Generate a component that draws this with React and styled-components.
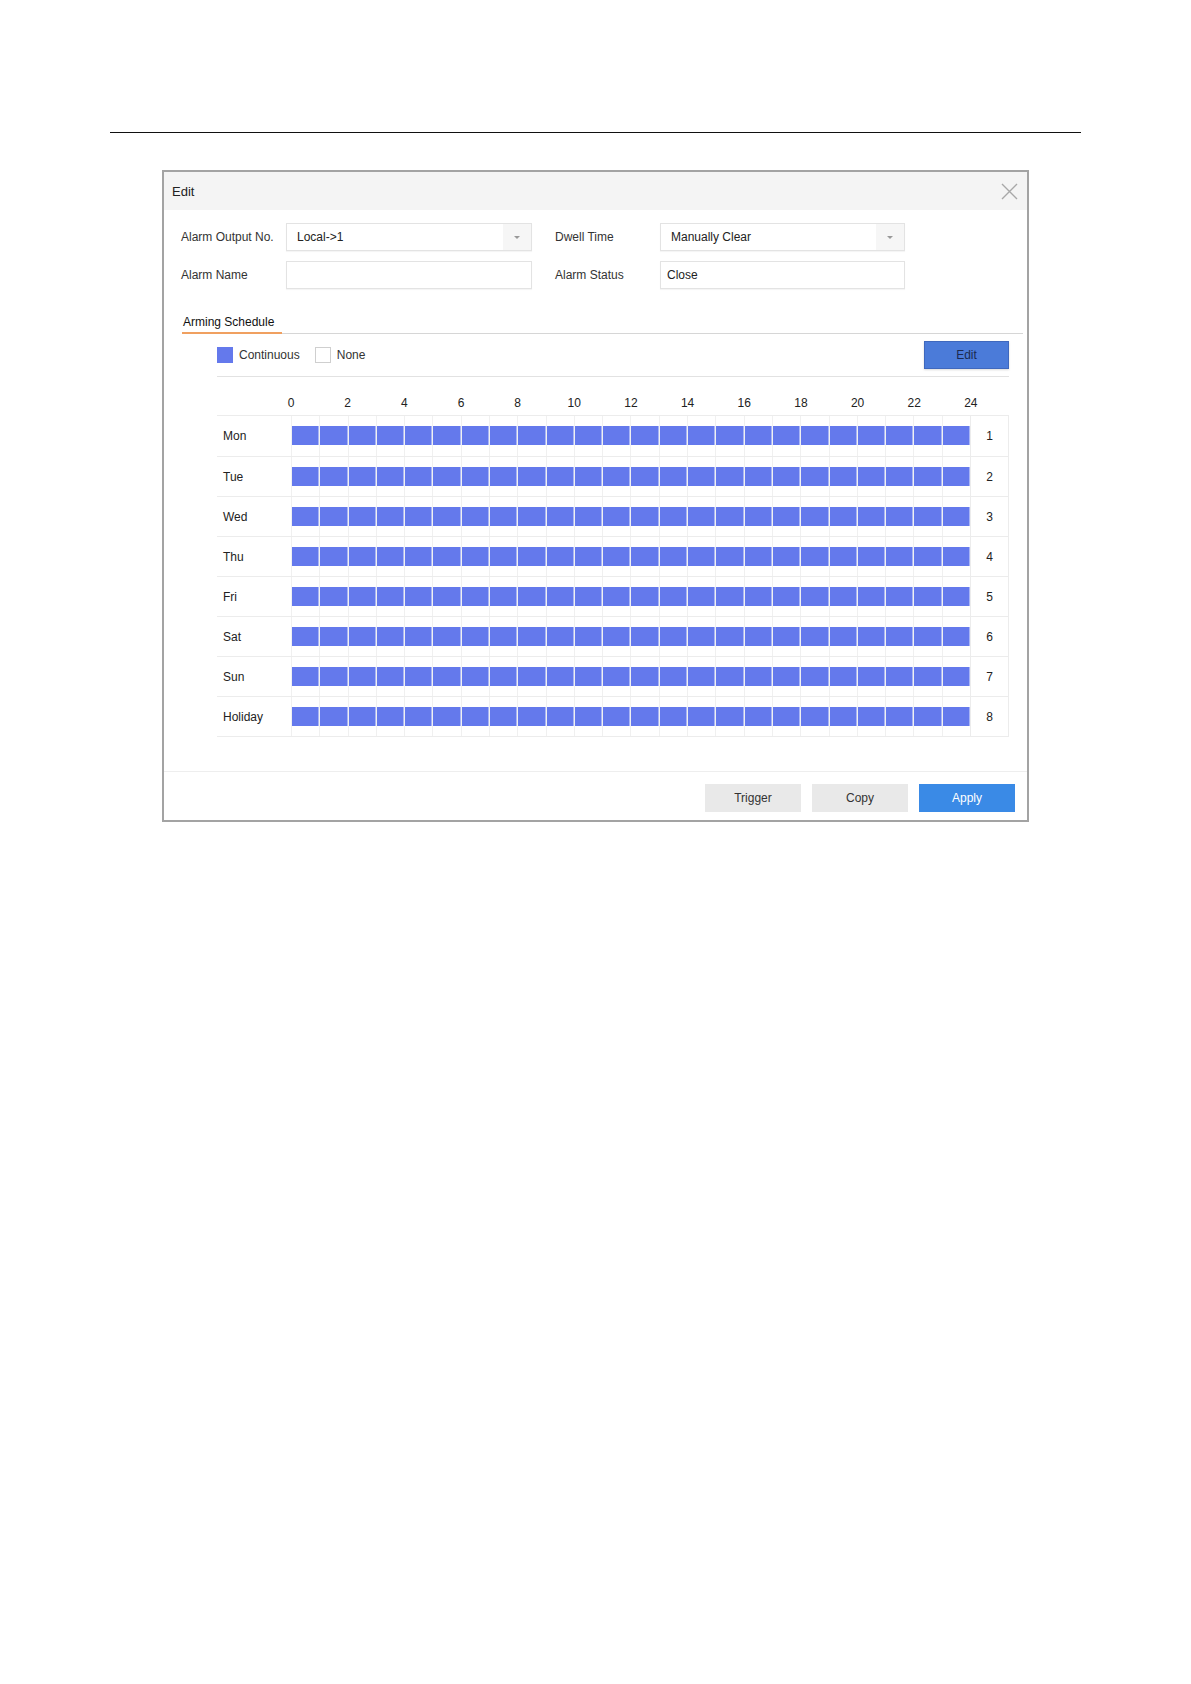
import React from 'react';
import styled, { createGlobalStyle } from 'styled-components';

const GlobalStyle = createGlobalStyle`
  html, body {
    margin: 0;
    padding: 0;
    background: #fff;
  }
  body {
    font-family: "Liberation Sans", Arial, sans-serif;
    color: #333;
  }
`;

const Page = styled.div`
  min-height: 1684px;
  padding: 132px 0 0 110px;
  box-sizing: border-box;
`;

const Rule = styled.div`
  width: 971px;
  border-top: 1px solid #111;
`;

const Dialog = styled.div`
  margin: 37px 0 0 52px;
  width: 867px;
  height: 652px;
  box-sizing: border-box;
  border: 2px solid #a3a3a3;
  display: flex;
  flex-direction: column;
  background: #fff;
`;

const TitleBar = styled.div`
  height: 38px;
  background: #f4f4f4;
  display: flex;
  align-items: center;
  justify-content: space-between;
  padding: 0 9px 0 8px;
  font-size: 13px;
  color: #222;
`;

const CloseButton = styled.button`
  width: 18px;
  height: 18px;
  padding: 0;
  border: none;
  background: none;
  display: flex;
  align-items: center;
  justify-content: center;
`;

const Form = styled.div`
  display: grid;
  grid-template-columns: 105px 246px 128px 245px;
  row-gap: 10px;
  padding: 13px 0 0 17px;
  align-items: center;
  & > :nth-child(4n + 3) {
    margin-left: 23px;
  }
`;

const Label = styled.div`
  font-size: 12px;
  color: #333;
  white-space: nowrap;
`;

const Field = styled.div`
  height: 28px;
  box-sizing: border-box;
  border: 1px solid #e3e3e3;
  box-shadow: 0 1px 1px rgba(0, 0, 0, 0.04);
  display: flex;
  align-items: center;
  font-size: 12px;
  color: #222;
  padding-left: ${(p) => (p.$select ? '10px' : '6px')};
  background: #fff;
`;

const FieldText = styled.span`
  flex: 1;
`;

const Caret = styled.span`
  width: 28px;
  align-self: stretch;
  background: #f6f6f6;
  display: flex;
  align-items: center;
  justify-content: center;
  &::after {
    content: '';
    border-left: 3px solid transparent;
    border-right: 3px solid transparent;
    border-top: 3px solid #999;
  }
`;

const TabBar = styled.div`
  margin: 26px 4px 0 18px;
  border-bottom: 1px solid #d6d6d6;
  display: flex;
`;

const Tab = styled.div`
  width: 99px;
  padding: 0 0 3px 1px;
  line-height: 14px;
  font-size: 12px;
  color: #111;
  border-bottom: 2px solid #f0a060;
  margin-bottom: -1px;
`;

const Schedule = styled.div`
  margin: 0 18px 0 53px;
`;

const LegendRow = styled.div`
  display: flex;
  align-items: center;
  padding: 7px 0 7px;
  border-bottom: 1px solid #e2e2e2;
`;

const LegendItem = styled.div`
  display: flex;
  align-items: center;
  gap: 6px;
  font-size: 12px;
  color: #333;
  margin-right: 15px;
`;

const Swatch = styled.span`
  width: 16px;
  height: 16px;
  box-sizing: border-box;
  background: ${(p) => (p.$on ? '#6479ec' : '#fff')};
  border: 1px solid ${(p) => (p.$on ? '#6479ec' : '#cfcfcf')};
`;

const EditButton = styled.button`
  margin-left: auto;
  width: 85px;
  height: 28px;
  background: #4b7bd9;
  border: 1px solid #3f68bd;
  box-shadow: 0 1px 2px rgba(0, 0, 0, 0.15);
  color: #1b2a50;
  font-family: inherit;
  font-size: 12px;
`;

const HourScale = styled.div`
  display: grid;
  grid-template-columns: 74px repeat(12, 56.67px) 38px;
  height: 38px;
  align-items: end;
  padding-bottom: 5px;
  box-sizing: border-box;
  font-size: 12px;
  color: #222;
`;

const HourTick = styled.span`
  transform: translateX(-50%);
  justify-self: start;
`;

const Table = styled.div`
  border: 1px solid #ececec;
  border-left: none;
`;

const Row = styled.div`
  display: grid;
  grid-template-columns: 74px 680px 1fr;
  height: 40px;
  border-top: ${(p) => (p.$first ? 'none' : '1px solid #ececec')};
  box-sizing: border-box;
`;

const DayLabel = styled.div`
  display: flex;
  align-items: center;
  padding-left: 6px;
  font-size: 12px;
  color: #222;
  box-shadow: 1px 0 0 #ececec;
`;

const Hours = styled.div`
  display: grid;
  grid-template-columns: repeat(24, 1fr);
  border-right: 1px solid #ececec;
`;

const HourCell = styled.div`
  border-left: 1px solid #f0f0f0;
  padding-top: 10px;
  &::before {
    content: '';
    display: block;
    height: 19px;
    background: #6479ec;
    box-shadow: inset -1px 0 0 #a9b5f5;
  }
`;

const RowNumber = styled.div`
  display: flex;
  align-items: center;
  justify-content: center;
  font-size: 12px;
  color: #222;
`;

const Footer = styled.div`
  margin-top: auto;
  border-top: 1px solid #eeeeee;
  display: flex;
  justify-content: flex-end;
  gap: 11px;
  padding: 12px 12px 8px 0;
`;

const FooterButton = styled.button`
  width: 96px;
  height: 28px;
  border: none;
  font-family: inherit;
  font-size: 12px;
  background: ${(p) => (p.$primary ? '#3a8ae6' : '#e9e9e9')};
  color: ${(p) => (p.$primary ? '#fff' : '#333')};
`;

const days = ['Mon', 'Tue', 'Wed', 'Thu', 'Fri', 'Sat', 'Sun', 'Holiday'];
const ticks = [0, 2, 4, 6, 8, 10, 12, 14, 16, 18, 20, 22, 24];

const CloseIcon = () => (
  <svg width="17" height="17" viewBox="0 0 17 17">
    <path d="M1 1 L16 16 M16 1 L1 16" stroke="#a8a8a8" strokeWidth="1.4" fill="none" />
  </svg>
);

const App = () => {
  return (
    <Page>
      <GlobalStyle />
      <Rule />
      <Dialog>
        <TitleBar>
          <span>Edit</span>
          <CloseButton>
            <CloseIcon />
          </CloseButton>
        </TitleBar>

        <Form>
          <Label>Alarm Output No.</Label>
          <Field $select>
            <FieldText>Local-&gt;1</FieldText>
            <Caret />
          </Field>
          <Label>Dwell Time</Label>
          <Field $select>
            <FieldText>Manually Clear</FieldText>
            <Caret />
          </Field>
          <Label>Alarm Name</Label>
          <Field />
          <Label>Alarm Status</Label>
          <Field>Close</Field>
        </Form>

        <TabBar>
          <Tab>Arming Schedule</Tab>
        </TabBar>

        <Schedule>
          <LegendRow>
            <LegendItem>
              <Swatch $on />
              Continuous
            </LegendItem>
            <LegendItem>
              <Swatch />
              None
            </LegendItem>
            <EditButton>Edit</EditButton>
          </LegendRow>

          <HourScale>
            <span />
            {ticks.map((t) => (
              <HourTick key={t}>{t}</HourTick>
            ))}
          </HourScale>

          <Table>
            {days.map((d, i) => (
              <Row key={d} $first={i === 0}>
                <DayLabel>{d}</DayLabel>
                <Hours>
                  {Array.from({ length: 24 }, (_, h) => (
                    <HourCell key={h} />
                  ))}
                </Hours>
                <RowNumber>{i + 1}</RowNumber>
              </Row>
            ))}
          </Table>
        </Schedule>

        <Footer>
          <FooterButton>Trigger</FooterButton>
          <FooterButton>Copy</FooterButton>
          <FooterButton $primary>Apply</FooterButton>
        </Footer>
      </Dialog>
    </Page>
  );
};

export default App;
